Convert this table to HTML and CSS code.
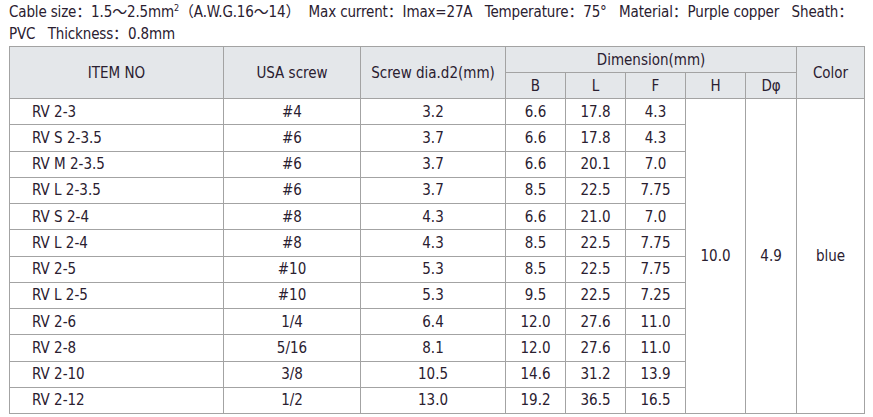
FILE: index.html
```html
<!DOCTYPE html>
<html>
<head>
<meta charset="utf-8">
<link rel="stylesheet" href="styles.css">
</head>
<body>
<div class="page">
  <p class="spec">Cable size：1.5～2.5mm<sup>2</sup>（A.W.G.16～14）&nbsp; Max current：Imax=27A&nbsp;&nbsp; Temperature：75°&nbsp;&nbsp; Material：Purple copper&nbsp;&nbsp; Sheath：<br>PVC&nbsp;&nbsp; Thickness：0.8mm</p>
  <table class="grid">
    <colgroup>
      <col class="c-item"><col class="c-usa"><col class="c-dia"><col class="c-b"><col class="c-l"><col class="c-f"><col class="c-h"><col class="c-d"><col class="c-color">
    </colgroup>
    <thead>
      <tr>
        <th rowspan="2">ITEM NO</th>
        <th rowspan="2">USA screw</th>
        <th rowspan="2">Screw dia.d2(mm)</th>
        <th colspan="5">Dimension(mm)</th>
        <th rowspan="2">Color</th>
      </tr>
      <tr>
        <th>B</th><th>L</th><th>F</th><th>H</th><th>Dφ</th>
      </tr>
    </thead>
    <tbody>
      <tr><td class="name">RV 2-3</td><td>#4</td><td>3.2</td><td>6.6</td><td>17.8</td><td>4.3</td><td rowspan="12">10.0</td><td rowspan="12">4.9</td><td rowspan="12">blue</td></tr>
      <tr><td class="name">RV S 2-3.5</td><td>#6</td><td>3.7</td><td>6.6</td><td>17.8</td><td>4.3</td></tr>
      <tr><td class="name">RV M 2-3.5</td><td>#6</td><td>3.7</td><td>6.6</td><td>20.1</td><td>7.0</td></tr>
      <tr><td class="name">RV L 2-3.5</td><td>#6</td><td>3.7</td><td>8.5</td><td>22.5</td><td>7.75</td></tr>
      <tr><td class="name">RV S 2-4</td><td>#8</td><td>4.3</td><td>6.6</td><td>21.0</td><td>7.0</td></tr>
      <tr><td class="name">RV L 2-4</td><td>#8</td><td>4.3</td><td>8.5</td><td>22.5</td><td>7.75</td></tr>
      <tr><td class="name">RV 2-5</td><td>#10</td><td>5.3</td><td>8.5</td><td>22.5</td><td>7.75</td></tr>
      <tr><td class="name">RV L 2-5</td><td>#10</td><td>5.3</td><td>9.5</td><td>22.5</td><td>7.25</td></tr>
      <tr><td class="name">RV 2-6</td><td>1/4</td><td>6.4</td><td>12.0</td><td>27.6</td><td>11.0</td></tr>
      <tr><td class="name">RV 2-8</td><td>5/16</td><td>8.1</td><td>12.0</td><td>27.6</td><td>11.0</td></tr>
      <tr><td class="name">RV 2-10</td><td>3/8</td><td>10.5</td><td>14.6</td><td>31.2</td><td>13.9</td></tr>
      <tr><td class="name">RV 2-12</td><td>1/2</td><td>13.0</td><td>19.2</td><td>36.5</td><td>16.5</td></tr>
    </tbody>
  </table>
</div>
</body>
</html>
```
FILE: styles.css
```css
html, body {
  margin: 0;
  padding: 0;
  background: #ffffff;
}
body {
  font-family: "DejaVu Sans Condensed", "DejaVu Sans", "Noto Sans CJK SC", sans-serif;
  font-stretch: semi-condensed;
  font-size: 15px;
  color: #2a2030;
}
.page {
  padding: 0 9px;
}
.spec {
  margin: 0;
  padding-top: 1px;
  line-height: 22px;
  height: 45px;
  white-space: nowrap;
  letter-spacing: -0.15px;
}
.spec sup {
  font-size: 9px;
  line-height: 0;
  vertical-align: 6px;
}
.grid {
  border-collapse: collapse;
  table-layout: fixed;
  width: 855px;
}
.c-item { width: 214px; }
.c-usa { width: 137px; }
.c-dia { width: 145px; }
.c-b { width: 60px; }
.c-l { width: 60px; }
.c-f { width: 60px; }
.c-h { width: 60px; }
.c-d { width: 51px; }
.c-color { width: 68px; }
.grid th, .grid td {
  border: 1px solid #a3a3a3;
  padding: 0;
  text-align: center;
  vertical-align: middle;
  font-weight: normal;
  white-space: nowrap;
}
.grid thead tr {
  height: 26px;
}
.grid th {
  background: #e4e7ea;
}
.grid tbody tr {
  height: 26.25px;
}
.grid td.name {
  text-align: left;
  padding-left: 22px;
}
```
